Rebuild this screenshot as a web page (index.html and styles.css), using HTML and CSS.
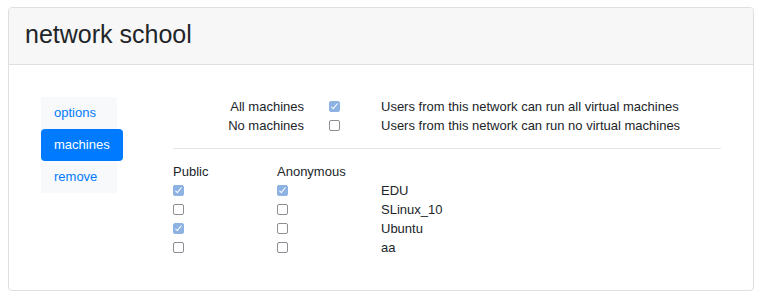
FILE: index.html
```html
<!DOCTYPE html>
<html>
<head>
<meta charset="utf-8">
<link rel="stylesheet" href="styles.css">
</head>
<body>
<div class="card">
  <div class="card-header"><h3 class="title">network school</h3></div>
  <div class="card-body">
    <nav class="nav">
      <a class="nav-link">options</a>
      <a class="nav-link active">machines</a>
      <a class="nav-link">remove</a>
    </nav>
    <div class="content">
      <div class="mode-grid">
        <span class="mode-label">All machines</span>
        <span class="cb-cell"><span class="cb checked"></span></span>
        <span>Users from this network can run all virtual machines</span>
        <span class="mode-label">No machines</span>
        <span class="cb-cell"><span class="cb"></span></span>
        <span>Users from this network can run no virtual machines</span>
      </div>
      <hr class="sep">
      <div class="machine-grid">
        <span>Public</span><span>Anonymous</span><span></span>
        <span class="cb-row"><span class="cb checked"></span></span><span class="cb-row"><span class="cb checked"></span></span><span>EDU</span>
        <span class="cb-row"><span class="cb"></span></span><span class="cb-row"><span class="cb"></span></span><span>SLinux_10</span>
        <span class="cb-row"><span class="cb checked"></span></span><span class="cb-row"><span class="cb"></span></span><span>Ubuntu</span>
        <span class="cb-row"><span class="cb"></span></span><span class="cb-row"><span class="cb"></span></span><span>aa</span>
      </div>
    </div>
  </div>
</div>
</body>
</html>
```
FILE: styles.css
```css
html, body { margin: 0; padding: 0; background: #fff; }
body {
  padding: 7px 8px 0 8px;
  font-family: "Liberation Sans", Arial, sans-serif;
  font-size: 13px;
  line-height: 19px;
  color: #212529;
}
.card {
  border: 1px solid #dfdfdf;
  border-radius: 4px;
  overflow: hidden;
}
.card-header {
  background: #f7f7f7;
  border-bottom: 1px solid #dfdfdf;
  padding: 12px 16px 16px 16px;
}
.title {
  margin: 0;
  font-weight: normal;
  font-size: 25px;
  line-height: 28px;
}
.card-body {
  display: flex;
  gap: 56px;
  padding: 32px 32px 33px 32px;
}
.nav {
  width: 76px;
  flex: none;
  background: #f8f9fa;
  display: flex;
  flex-direction: column;
  align-self: flex-start;
}
.nav-link {
  color: #007bff;
  padding: 6px 13px;
  line-height: 20px;
  border-radius: 4px;
  white-space: nowrap;
}
.nav-link.active {
  background: #007bff;
  color: #fff;
  width: 56px;
}
.content { flex: 1; }
.mode-grid {
  display: grid;
  grid-template-columns: 131px 77px 1fr;
}
.mode-label { text-align: right; }
.cb-cell { padding-left: 25px; display: flex; align-items: center; }
.cb-row { display: flex; align-items: center; }
.cb {
  display: inline-block;
  box-sizing: border-box;
  width: 11px;
  height: 11px;
  border: 1px solid #8d8d93;
  border-radius: 2px;
  background: #fff;
  position: relative;
}
.cb.checked {
  background: #8db3e2;
  border-color: #8db3e2;
}
.cb.checked::after {
  content: "";
  position: absolute;
  left: 3px;
  top: 0px;
  width: 2px;
  height: 6px;
  border: solid #fff;
  border-width: 0 1.5px 1.5px 0;
  transform: rotate(40deg);
}
.sep {
  border: 0;
  border-top: 1px solid #e5e5e5;
  margin: 13px 0 13px 0;
}
.machine-grid {
  display: grid;
  grid-template-columns: 104px 104px 1fr;
}
```
